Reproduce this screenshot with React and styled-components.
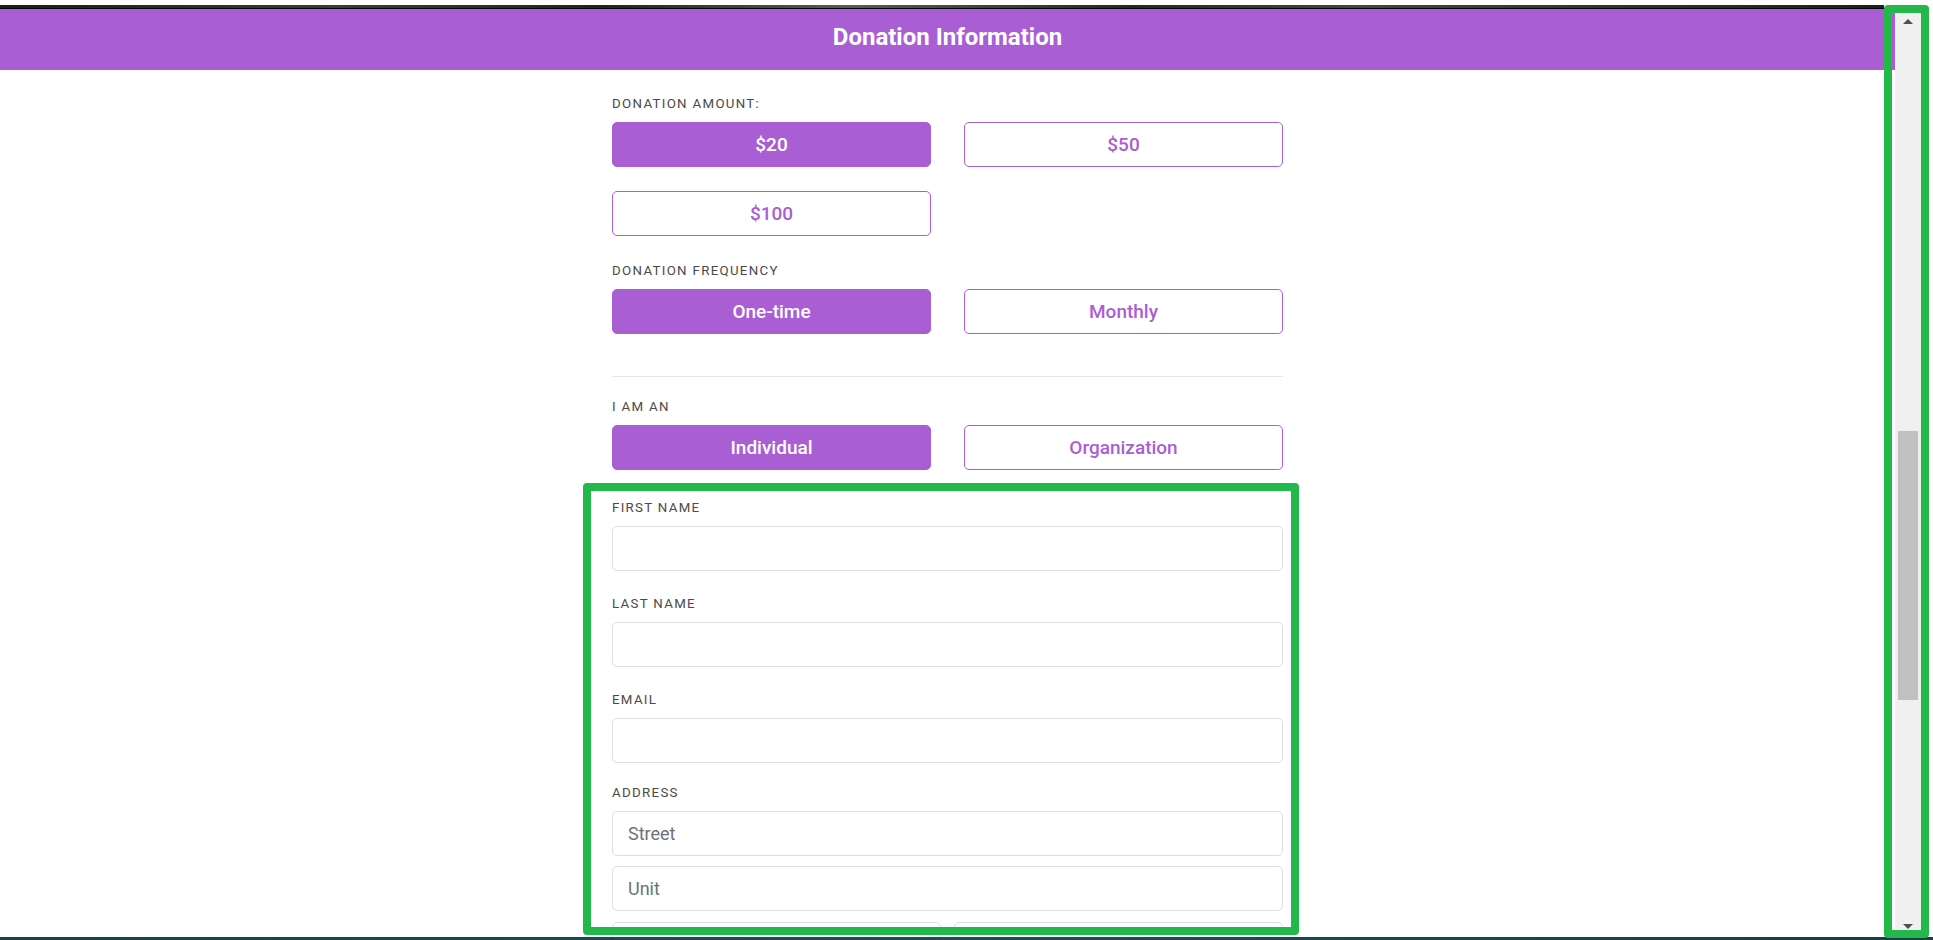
import styled, { createGlobalStyle } from "styled-components";

const GlobalStyle = createGlobalStyle`
    html, body {
        margin: 0;
        padding: 0;
        background: #fff;
        overflow: hidden;
    }
    body {
        font-family: Roboto, "Liberation Sans", Arial, sans-serif;
    }
`

const purple = "#aa5ed4";

const Screen = styled.div`
    position: relative;
    width: 1933px;
    height: 940px;
    display: flex;
    flex-direction: column;
    background: #fff;
    overflow: hidden;
`
const TopStrip = styled.div`
    height: 4px;
    margin-top: 5px;
    width: 1884px;
    background: linear-gradient(90deg, #1c1c1c 0%, #3a3a3a 18%, #222 32%, #5a5a5a 45%, #262626 60%, #444 72%, #1e1e1e 100%);
    border-bottom: 1px solid #000;
    box-sizing: border-box;
`
const Body = styled.div`
    flex: 1;
    display: flex;
    min-height: 0;
`
const Main = styled.main`
    width: 1895px;
    display: flex;
    flex-direction: column;
    overflow: hidden;
`
const Header = styled.header`
    height: 61px;
    box-sizing: border-box;
    padding-bottom: 5px;
    flex-shrink: 0;
    background: ${purple};
    display: flex;
    align-items: center;
    justify-content: center;
`
const Title = styled.h1`
    margin: 0;
    color: #fff;
    font-size: 24px;
    font-weight: 700;
`
const Form = styled.form`
    width: 671px;
    margin: 0 auto;
    padding-top: 26px;
    display: flex;
    flex-direction: column;
`
const Group = styled.div`
    display: flex;
    flex-direction: column;
    margin-top: ${(p) => p.$top || 0}px;
`
const Label = styled.label`
    display: block;
    font-size: 13.3px;
    line-height: 16px;
    font-weight: 400;
    letter-spacing: 1.3px;
    text-transform: uppercase;
    color: #4a4a4a;
    margin-bottom: ${(p) => p.$gap || 10}px;
`
const ChoiceGrid = styled.div`
    display: grid;
    grid-template-columns: 1fr 1fr;
    column-gap: 33px;
    row-gap: 24px;
`
const Choice = styled.button`
    height: 45px;
    border-radius: 5px;
    border: 1px solid ${purple};
    background: ${(p) => (p.$active ? purple : "#fff")};
    color: ${(p) => (p.$active ? "#fff" : purple)};
    font-family: Roboto, "Liberation Sans", Arial, sans-serif;
    font-size: 19px;
    font-weight: 500;
    cursor: pointer;
`
const Divider = styled.hr`
    border: none;
    border-top: 1px solid #e6e6ec;
    margin: 42px 0 22px;
`
const Input = styled.input`
    box-sizing: border-box;
    width: 100%;
    height: 45px;
    border: 1px solid #dedede;
    border-radius: 5px;
    padding: 0 15px;
    font-family: Roboto, "Liberation Sans", Arial, sans-serif;
    font-size: 18px;
    color: #333;
    margin-bottom: ${(p) => p.$gap || 0}px;

    &::placeholder {
        color: #6c737a;
    }
`
const InputRow = styled.div`
    display: grid;
    grid-template-columns: 1fr 1fr;
    column-gap: 13px;
`
const Scrollbar = styled.div`
    position: relative;
    width: 26px;
    background: #f0f0f0;
    flex-shrink: 0;
`
const Thumb = styled.div`
    position: absolute;
    left: 3px;
    right: 3px;
    top: 422px;
    height: 269px;
    background: #c1c1c1;
`
const Arrow = styled.div`
    position: absolute;
    left: 50%;
    transform: translateX(-50%);
    width: 0;
    height: 0;
    border-left: 5px solid transparent;
    border-right: 5px solid transparent;
    ${(p) => (p.$down
        ? `bottom: 8px; border-top: 5px solid #505050;`
        : `top: 10px; border-bottom: 5px solid #505050;`)}
`
const BottomStrip = styled.div`
    height: 3px;
    background: linear-gradient(90deg, #174249, #1d4d55 50%, #163f46);
`
const Highlight = styled.div`
    position: absolute;
    box-sizing: border-box;
    border: 8px solid #22b84a;
    border-radius: 4px;
    pointer-events: none;
    left: ${(p) => p.$x}px;
    top: ${(p) => p.$y}px;
    width: ${(p) => p.$w}px;
    height: ${(p) => p.$h}px;
`

const amounts = ["$20", "$50", "$100"];

const App = () => {
    return (
        <>
        <GlobalStyle />
        <Screen>
            <TopStrip />
            <Body>
                <Main>
                    <Header>
                        <Title>Donation Information</Title>
                    </Header>
                    <Form onSubmit={(e) => e.preventDefault()}>
                        <Group>
                            <Label>Donation Amount:</Label>
                            <ChoiceGrid>
                                {amounts.map((a, i) => (
                                    <Choice type="button" key={a} $active={i === 0}>{a}</Choice>
                                ))}
                            </ChoiceGrid>
                        </Group>
                        <Group $top={27}>
                            <Label>Donation Frequency</Label>
                            <ChoiceGrid>
                                <Choice type="button" $active>One-time</Choice>
                                <Choice type="button">Monthly</Choice>
                            </ChoiceGrid>
                        </Group>
                        <Divider />
                        <Group>
                            <Label $gap={10}>I am an</Label>
                            <ChoiceGrid>
                                <Choice type="button" $active>Individual</Choice>
                                <Choice type="button">Organization</Choice>
                            </ChoiceGrid>
                        </Group>
                        <Group $top={30}>
                            <Label $gap={10}>First Name</Label>
                            <Input />
                        </Group>
                        <Group $top={25}>
                            <Label>Last Name</Label>
                            <Input />
                        </Group>
                        <Group $top={25}>
                            <Label>Email</Label>
                            <Input type="email" />
                        </Group>
                        <Group $top={22}>
                            <Label>Address</Label>
                            <Input placeholder="Street" $gap={10} />
                            <Input placeholder="Unit" $gap={11} />
                            <InputRow>
                                <Input placeholder="City" />
                                <Input placeholder="State/Province" />
                            </InputRow>
                        </Group>
                    </Form>
                </Main>
                <Scrollbar>
                    <Arrow />
                    <Thumb />
                    <Arrow $down />
                </Scrollbar>
            </Body>
            <BottomStrip />
            <Highlight $x={583} $y={483} $w={716} $h={452} />
            <Highlight $x={1884} $y={5} $w={45} $h={933} />
        </Screen>
        </>
    )
}

export default App
